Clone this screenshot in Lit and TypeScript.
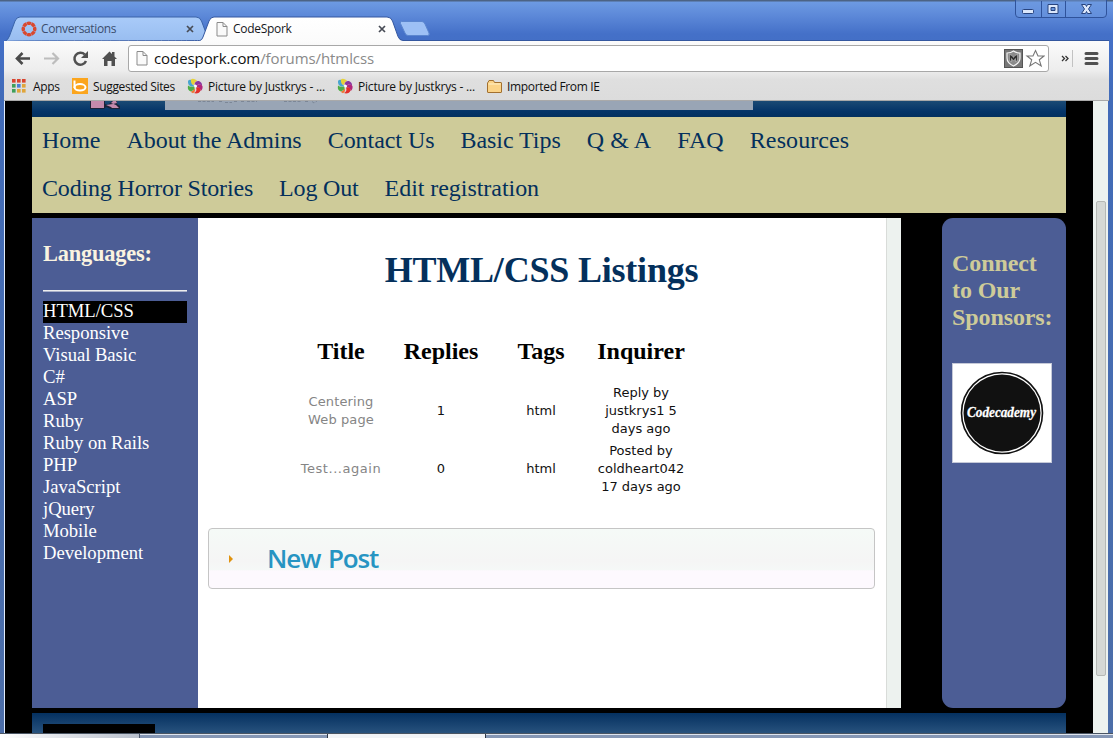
import { LitElement, html, css, svg } from "lit";
import { customElement } from "lit/decorators.js";
import { classMap } from "lit/directives/class-map.js";

const page = html`<svg class="ic" width="12" height="15" viewBox="0 0 12 15"><path d="M1 .5h6l4 4v9.5h-10z" fill="#fafafa" stroke="#8b8b8b"/><path d="M7 .5v4h4" fill="none" stroke="#8b8b8b"/></svg>`;
const cross = html`<svg width="8" height="8" viewBox="0 0 8 8"><path d="M1 1l6 6M7 1L1 7" stroke="#474b55" stroke-width="1.700"/></svg>`;
const pinwheel = html`<svg class="ic" width="16" height="16" viewBox="0 0 16 16">
  <path d="M1 3Q.5 7 4 8.500L7.500 8.500L5.500 6L5 2Q2 1 1 3Z" fill="#4aa5cf"/>
  <path d="M4 1.500Q3.500 6 6.500 7L8 4.500L10 2.500Q6 -.5 4 1.500Z" fill="#e6d23a"/>
  <path d="M1 7.500Q0 12.500 4 13.500L7.500 11.500L7.500 8.500Q3 9.500 1 7.500Z" fill="#4fae46"/>
  <path d="M7.500 6.500Q8 2.500 12 3Q15.500 4.500 15 8Q12.500 5 10 7.500Z" fill="#8a36a0"/>
  <path d="M10 7.500Q13 5 15.500 8Q16 11.500 13.500 13Q13.500 9 10 9.500Z" fill="#b3267c"/>
  <path d="M9 9.500Q13.500 8.500 13.500 12.500Q12.500 15.500 9 15.500L7 15Q10.500 13 9 9.500Z" fill="#e3312b"/>
  <path d="M7.500 10.500Q9 13 6 15.300L3.500 13.800Q6.500 13 7.500 10.500Z" fill="#ee7430"/>
  <path d="M6.800 7.500L8.800 6.500L10 8.300L8 9.800Z" fill="#fff"/>
</svg>`;

@customElement("browser-tabs")
class BrowserTabs extends LitElement {
  static styles = css`
    :host { display: block; height: 41px; position: relative; font: 12px "Open Sans", sans-serif; }
    .shape { position: absolute; inset: 0; }
    .row { position: relative; display: flex; align-items: center; height: 24px; padding: 17px 0 0 21px; }
    .tab { display: flex; align-items: center; box-sizing: border-box; }
    .first { width: 195px; color: #3b4d6e; }
    .second { width: 170px; color: #15171c; }
    .label { flex: 1; white-space: nowrap; position: relative; top: -1px; }
    .first .label { padding-left: 4px; letter-spacing: -0.35px; }
    .second .label { padding-left: 5px; letter-spacing: -0.3px; }
    .first .x { margin-right: 22px; }
    .x { display: flex; }
    .ic { display: block; }
    .controls { position: absolute; left: 1015px; top: 0; }
  `;
  render() {
    const spokes = Array.from({ length: 8 }, (_, i) => svg`<path d="M5.400 1.200Q8 -.2 10.600 1.200L9.500 4H6.500Z" transform="rotate(${i * 45} 8 8)" fill="#d9482f"/>`);
    return html`
      <svg class="shape" width="1113" height="41" viewBox="0 0 1113 41">
        <defs>
          <linearGradient id="t1" x2="0" y2="1"><stop stop-color="#a9cbf9"/><stop offset="1" stop-color="#98bdf0"/></linearGradient>
          <linearGradient id="t2" x2="0" y2="1"><stop stop-color="#fff"/><stop offset="1" stop-color="#fbfbfb"/></linearGradient>
        </defs>
        <path d="M5 41.500Q8 40 9.500 36L15 21Q16.500 17 20 17H196Q200 17 201.500 21L206 33L203 41.500Z" fill="url(#t1)" stroke="#3a63a8"/>
        <path d="M4 41.500C5 40.500 198 41 200 40.500Q202 40 203 37L209 21Q210.500 17 214 17H387Q391 17 392.500 21L398 36.500Q399.500 40.500 403 40.500H1109V43H4Z" fill="url(#t2)" stroke="#34579f"/>
        <path d="M401.500 21.500H422Q424 21.500 425 24L429 33Q430 35.500 427.500 35.500H408Q406 35.500 405 33L400.500 23.500Q400 21.500 401.500 21.500Z" fill="#9dc0f5" stroke="#5b86cf"/>
      </svg>
      <div class="row">
        <div class="tab first"><svg class="ic" width="16" height="16" viewBox="0 0 16 16">${spokes}</svg><span class="label">Conversations</span><span class="x">${cross}</span></div>
        <div class="tab second">${page}<span class="label">CodeSpork</span><span class="x">${cross}</span></div>
      </div>
      <svg class="controls" width="98" height="19" viewBox="0 0 98 19">
        <path d="M.5 0V14Q.5 17.500 4 17.500H88Q91.500 17.500 91.500 14V0" fill="#6c98e0" fill-opacity=".5" stroke="#2f539b"/>
        <path d="M26.500 1V17M50.500 1V17" stroke="#2f539b"/>
        <rect x="7.500" y="9.500" width="11" height="4" rx="1" fill="#dbe7fb" stroke="#28447f"/>
        <path d="M33 4.500H43V13.500H33ZM36 7.500V10.500H40V7.500Z" fill="#dbe7fb" fill-rule="evenodd" stroke="#28447f"/>
        <path d="M66.500 4.500H70.500L71.500 6.500L72.500 4.500H76.500L73.500 9L76.500 13.500H72.500L71.500 11.500L70.500 13.500H66.500L69.500 9Z" fill="#dbe7fb" stroke="#28447f"/>
      </svg>`;
  }
}

@customElement("browser-toolbar")
class BrowserToolbar extends LitElement {
  static styles = css`
    :host { display: block; height: 60px; box-sizing: border-box; margin: 0 4px; background: linear-gradient(#fbfbfb, #ededed 50%, #dfdfdf 65%, #dcdcdc); border-bottom: 1px solid #a9a9a9; }
    .nav { height: 31px; padding-top: 4px; box-sizing: border-box; display: flex; }
    .buttons, .extra { display: block; flex: none; }
    .box { width: 921px; height: 27px; box-sizing: border-box; border: 1px solid #a8a8a8; border-radius: 3px; background: #fff; display: flex; align-items: center; padding: 0 3px 0 7px; }
    .url { flex: 1; padding-left: 6px; font: 15px/24px "Open Sans", sans-serif; color: #8a8a8a; letter-spacing: -0.08px; height: 25px; }
    .host { color: #111; }
    .marks { display: flex; align-items: center; height: 28px; padding-left: 8px; font: 12px "Open Sans", sans-serif; color: #111; }
    .m { display: flex; align-items: center; white-space: nowrap; gap: 5px; flex: none; box-sizing: border-box; }
    .apps { width: 60px; gap: 6px; letter-spacing: -0.3px; }
    .sites { width: 115px; letter-spacing: -0.36px; }
    .pic { width: 150px; gap: 5px; letter-spacing: -0.2px; }
    .imp { letter-spacing: -0.33px; }
    svg { display: block; flex: none; }
  `;
  render() {
    const cols = ["#d9452f", "#d9452f", "#d9452f", "#3fa05a", "#4a7fd6", "#e0a53a", "#3fa05a", "#e0a53a", "#e0a53a"];
    return html`
      <div class="nav">
        <svg class="buttons" width="124" height="27" viewBox="4 45 124 27">
          <path d="M30 58.500H18M22.500 53L17 58.500L22.500 64" fill="none" stroke="#4a4a4a" stroke-width="2.600"/>
          <path d="M44 58.500H57M52.500 53L58 58.500L52.500 64" fill="none" stroke="#bdbdbd" stroke-width="2.200"/>
          <path d="M86 61A6 6 0 1 1 84.800 54.500" fill="none" stroke="#505050" stroke-width="2.500"/><path d="M88 51V58H81Z" fill="#505050"/>
          <path d="M102 59L109.500 51.500L112 54V52H114.500V56.500L117 59H115V66H111.500V61H107.500V66H104V59Z" fill="#505050"/>
        </svg>
        <div class="box">
          ${page}<span class="url"><span class="host">codespork.com</span>/forums/htmlcss</span>
          <svg width="42" height="19" viewBox="0 0 42 19">
            <rect x="1.500" y=".5" width="18" height="18" fill="#777" stroke="#555"/>
            <path d="M4 4Q8 4 10.500 2Q13 4 17 4V9Q17 14 10.500 17Q4 14 4 9Z" fill="#8b8b8b" stroke="#f5f5f5" stroke-width="1.200"/>
            <path d="M6.500 5.500L9 6.500L10.500 8.500L12 6.500L14.500 5.500V11.500L12.500 12.500V9.500L10.500 12L8.500 9.500V12.500L6.500 11.500Z" fill="#333" stroke="#eee" stroke-width=".4"/>
            <path d="M32.500 1.500L35 7H41L36.300 10.800L38.200 17L32.500 13.300L26.800 17L28.700 10.800L24 7H30Z" fill="#fff" stroke="#777" stroke-width="1.100"/>
          </svg>
        </div>
        <svg class="extra" width="60" height="27" viewBox="1049 45 60 27">
          <path d="M1062 56L1064.500 58.500L1062 61M1065.500 56L1068 58.500L1065.500 61" fill="none" stroke="#333" stroke-width="1.300"/>
          <path d="M1072.500 50V67" stroke="#c2c2c2"/>
          <path d="M1086 53.500H1097M1086 58.500H1097M1086 63.500H1097" stroke="#505050" stroke-width="3" stroke-linecap="round"/>
        </svg>
      </div>
      <div class="marks">
        <div class="m apps"><svg width="15" height="14" viewBox="0 0 15 14">${cols.map((c, i) => svg`<rect x=${(i % 3) * 5} y=${Math.floor(i / 3) * 5} width="3.600" height="3.600" fill=${c}/>`)}</svg>Apps</div>
        <div class="m sites"><svg width="16" height="16" viewBox="0 0 16 16"><rect width="16" height="16" fill="#fba51d"/><path d="M2.500 2.500V10" stroke="#fff" stroke-width="2"/><ellipse cx="8" cy="9.300" rx="5.500" ry="3.200" fill="none" stroke="#fff" stroke-width="2"/></svg>Suggested Sites</div>
        <div class="m pic">${pinwheel}Picture by Justkrys - ...</div>
        <div class="m pic">${pinwheel}Picture by Justkrys - ...</div>
        <div class="m imp"><svg width="15" height="13" viewBox="0 0 15 13"><path d="M.5 3Q.5 2.500 1 2.500L2 .5H6.500L7.500 2.500H14Q14.500 2.500 14.500 3V12Q14.500 12.500 14 12.500H1Q.5 12.500 .5 12Z" fill="#fbd387" stroke="#a2702f"/><path d="M1.500 4H13.500" stroke="#fff0c8"/></svg>Imported From IE</div>
      </div>`;
  }
}

@customElement("forum-page")
class ForumPage extends LitElement {
  static styles = css`
    :host { display: flex; flex-direction: column; width: 1034px; height: 632px; overflow: hidden; background: #000; padding: 0 27px; font-family: "Liberation Serif", serif; }
    .banner { height: 16px; flex: none; background: linear-gradient(#1b4a74, #043468 65%, #03305f); display: flex; }
    .mascot { width: 133px; height: 8px; }
    .blurb { width: 588px; height: 9px; background: #99a5b5; overflow: hidden; }
    .blurb svg { display: block; }
    .links { height: 96px; flex: none; background: #cecb99; margin-bottom: 5px; }
    .line { display: flex; gap: 26px; padding-left: 10px; height: 48px; font-size: 24px; line-height: 47px; color: #04305c; white-space: nowrap; letter-spacing: -0.05px; }
    .line span:nth-child(n + 5) { letter-spacing: 0.1px; }
    .line + .line { letter-spacing: -0.17px; }
    .line + .line span:nth-child(n + 3) { letter-spacing: -0.05px; }
    .body { height: 490px; flex: none; display: flex; margin-bottom: 5px; }
    .langs { width: 166px; box-sizing: border-box; padding: 23px 11px 0; background: #4c5d95; color: #fff; }
    .lh { font-weight: bold; font-size: 22.400px; line-height: 26px; color: #faf3e0; letter-spacing: -0.2px; }
    .rule { height: 1px; margin: 23px 0 9px; background: #eee; border-bottom: 1px solid #a9b0ca; }
    .lang { font-size: 18.670px; line-height: 20px; height: 22px; letter-spacing: -0.04px; white-space: nowrap; }
    .on { background: #000; }
    .main { width: 688px; box-sizing: border-box; padding: 31px 11px 0 10px; background: #fff; }
    .gutter { width: 15px; box-sizing: border-box; background: #edf2ef; border-left: 1px solid #d9dcd9; margin-right: 41px; }
    h1 { margin: 0; text-align: center; font-size: 36px; line-height: 42px; color: #04305c; letter-spacing: -0.2px; }
    .table { display: grid; grid-template-columns: repeat(4, 100px); margin: 45px 0 0 83px; text-align: center; }
    .th { font-weight: bold; font-size: 24px; line-height: 30px; height: 46px; color: #000; }
    .td { height: 58px; display: flex; flex-direction: column; justify-content: center; font: 13px/18px "DejaVu Sans", sans-serif; color: #111; white-space: nowrap; letter-spacing: 0; }
    .td.t { color: #858585; letter-spacing: 0.12px; }
    .td.dots { letter-spacing: 0.55px; }
    .post { margin-top: 30px; height: 61px; width: 667px; box-sizing: border-box; border: 1px solid #c5c5c5; border-radius: 4px; background: linear-gradient(#f5faf7, #f5f5f5 55%, #f5f8f7 69%, #fdf9fe 71%); display: flex; align-items: center; padding-left: 20px; }
    .np { margin: 0 0 2px 34px; font: 600 26px/36px "Open Sans", sans-serif; color: #2694c2; letter-spacing: -1.100px; word-spacing: 2px; }
    .sponsors { width: 124px; box-sizing: border-box; padding: 32px 10px 0; border-radius: 11px; background: #4c5d95; }
    .sh { font-weight: bold; font-size: 24px; line-height: 27px; color: #cecb99; white-space: nowrap; margin-bottom: 32px; letter-spacing: -0.1px; }
    .logo { display: block; }
    .foot { height: 20px; flex: none; background: linear-gradient(#04305f, #28527d); padding: 11px 0 0 11px; box-sizing: border-box; }
    .black { width: 112px; height: 9px; background: #000; }
  `;
  render() {
    const nav = [["Home", "About the Admins", "Contact Us", "Basic Tips", "Q & A", "FAQ", "Resources"], ["Coding Horror Stories", "Log Out", "Edit registration"]];
    const langs = ["HTML/CSS", "Responsive", "Visual Basic", "C#", "ASP", "Ruby", "Ruby on Rails", "PHP", "JavaScript", "jQuery", "Mobile", "Development"];
    const rows = [[["Centering", "Web page"], ["1"], ["html"], ["Reply by", "justkrys1 5", "days ago"]], [["Test...again"], ["0"], ["html"], ["Posted by", "coldheart042", "17 days ago"]]];
    return html`
      <div class="banner">
        <svg class="mascot" viewBox="32 101 133 8"><path d="M90 101H105V104L108 105L112 101H117V104L120 106V109H111L106 107L104 109H90Z" fill="#1c2338"/><path d="M91 101H104V108H91ZM106 105L111 107L112 108H119L116 105L111 103L113 101H116L117 103L113 104Z" fill="#c58aac"/></svg>
        <div class="blurb"><svg width="588" height="9" viewBox="165 101 588 9"><path d="M198 101.500H214M219 101.500H222M225 102.500H232M234 101.500H238M241 101.500H244M247 101.500H257M284 101.500H301M305 101.500H309M312 101.500L314 103L317 101" stroke="#7c8797" stroke-dasharray="3 1.500" fill="none"/></svg></div>
      </div>
      <div class="links">${nav.map((l) => html`<div class="line">${l.map((t) => html`<span>${t}</span>`)}</div>`)}</div>
      <div class="body">
        <div class="langs"><div class="lh">Languages:</div><div class="rule"></div>${langs.map((t, i) => html`<div class=${classMap({ lang: true, on: i === 0 })}>${t}</div>`)}</div>
        <div class="main">
          <h1>HTML/CSS Listings</h1>
          <div class="table">
            ${["Title", "Replies", "Tags", "Inquirer"].map((t) => html`<div class="th">${t}</div>`)}
            ${rows.map((r) => r.map((c, i) => html`<div class=${classMap({ td: true, t: i === 0, dots: c[0].includes("...") })}>${c.map((x) => html`<div>${x}</div>`)}</div>`))}
          </div>
          <div class="post"><svg width="4" height="8" viewBox="0 0 4 8"><path d="M0 0L4 4L0 8Z" fill="#e0930f"/></svg><span class="np">New Post</span></div>
        </div>
        <div class="gutter"></div>
        <div class="sponsors">
          <div class="sh">Connect<br />to Our<br />Sponsors:</div>
          <svg class="logo" width="100" height="100" viewBox="0 0 100 100">
            <rect x=".5" y=".5" width="99" height="99" fill="#fff" stroke="#c5c9d8"/>
            <circle cx="50" cy="50" r="40.500" fill="#fff" stroke="#111" stroke-width="1.600"/><circle cx="50" cy="50" r="38.500" fill="#111"/>
            <text x="49.500" y="54" text-anchor="middle" textLength="69" lengthAdjust="spacingAndGlyphs" font-family="Liberation Serif, serif" font-size="15" font-weight="bold" font-style="italic" fill="#fff" stroke="#fff" stroke-width=".3">Codecademy</text>
          </svg>
        </div>
      </div>
      <div class="foot"><div class="black"></div></div>`;
  }
}

@customElement("app-root")
class AppRoot extends LitElement {
  static styles = css`
    :host { display: block; width: 1113px; height: 738px; overflow: hidden; }
    .window { height: 733px; box-sizing: border-box; background: linear-gradient(#4c6384 0, #4c6384 1px, #6d9ae2 2px, #5c88d8 16px, #4470c8 34px, #416bb8 101px, #4c6ea8 733px); overflow: hidden; }
    .view { display: flex; height: 632px; border-left: 1px solid #e1ecfb; margin: 0 5px 0 4px; }
    .scroll { width: 15px; box-sizing: border-box; background: #edf2ef; padding: 100px 2px 0 3px; }
    .thumb { height: 475px; box-sizing: border-box; background: #d5d8d5; border: 1px solid #b5b8b5; border-radius: 2px; }
    .task { height: 5px; display: flex; box-sizing: border-box; border-top: 1px solid #4a5563; background: linear-gradient(#dfe5ee 1px, #8597b5 1px); }
    .a { width: 139px; border-right: 1px solid #4c586c; background: linear-gradient(90deg, #fff, #b9c0cc); }
    .b { width: 157px; margin-left: 187px; border: solid #2f3846; border-width: 0 1px; background: #f2f4f7; }
  `;
  render() {
    return html`
      <div class="window">
        <browser-tabs></browser-tabs>
        <browser-toolbar></browser-toolbar>
        <div class="view"><forum-page></forum-page><div class="scroll"><div class="thumb"></div></div></div>
      </div>
      <div class="task"><div class="a"></div><div class="b"></div></div>`;
  }
}
